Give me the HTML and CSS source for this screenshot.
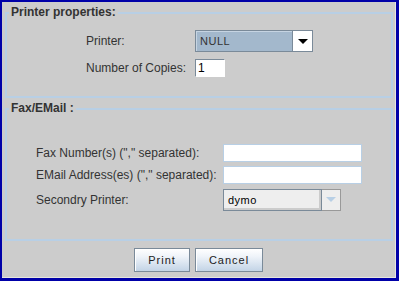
FILE: index.html
```html
<!DOCTYPE html>
<html lang="en">
<head>
  <meta charset="UTF-8" />
  <title>Print</title>
  <link rel="stylesheet" href="styles.css">
</head>
<body>
  <div class="window">
    <div class="frame">
      <div class="group printer-group">
        <span class="group-title">Printer properties:</span>
        <div class="form-grid printer-grid">
          <label>Printer:</label>
          <div class="combo combo-active">
            <span class="combo-text">NULL</span>
            <span class="combo-arrow"><i class="tri"></i></span>
          </div>
          <label>Number of Copies:</label>
          <input type="text" class="copies" value="1">
        </div>
      </div>

      <div class="group fax-group">
        <span class="group-title">Fax/EMail :</span>
        <div class="form-grid fax-grid">
          <label>Fax Number(s) (&quot;,&quot; separated):</label>
          <input type="text" class="field">
          <label>EMail Address(es) (&quot;,&quot; separated):</label>
          <input type="text" class="field">
          <label>Secondry Printer:</label>
          <div class="combo combo-plain">
            <span class="combo-text">dymo</span>
            <span class="combo-arrow"><i class="tri"></i></span>
          </div>
        </div>
      </div>

      <div class="buttons">
        <button class="btn btn-print">Print</button>
        <button class="btn btn-cancel">Cancel</button>
      </div>
    </div>
  </div>
</body>
</html>
```

FILE: styles.css
```css
body {
  margin: 0;
  font-family: "Liberation Sans", Arial, sans-serif;
  background: #cccccc;
}

.window {
  box-sizing: border-box;
  width: 399px;
  height: 281px;
  border-style: solid;
  border-color: #0000a8;
  border-width: 2px 3px 3px 2px;
  background: #cccccc;
}

.frame {
  box-sizing: border-box;
  height: 100%;
  border-right: 1px solid #e6e6de;
  border-bottom: 1px solid #e6e6de;
  padding-top: 10px;
}

.group {
  position: relative;
  margin: 0 2px 0 3px;
  border: 2px solid #b8cfe5;
}

/* titled border: the caption sits over the top line */
.group-title {
  position: absolute;
  left: 2px;
  top: -9px;
  padding: 0 2px;
  background: #cccccc;
  font-size: 12px;
  line-height: 14px;
  font-weight: bold;
  color: #333333;
}

.fax-group {
  margin-top: 10px;
}

.form-grid {
  display: grid;
  align-items: center;
  justify-items: start;
  font-size: 12px;
  color: #333333;
}

.printer-grid {
  grid-template-columns: 109px auto;
  grid-template-rows: 22px 18px;
  row-gap: 7px;
  padding: 16px 0 19px 79px;
}

.fax-grid {
  grid-template-columns: 187px auto;
  grid-template-rows: 18px 18px 23px;
  row-gap: 4px;
  padding: 34px 0 28px 29px;
}

/* combo boxes */
.combo {
  display: flex;
  width: 118px;
  height: 22px;
  box-sizing: border-box;
  font-size: 11px;
}

.combo-text {
  flex: 1;
  display: flex;
  align-items: center;
  padding-left: 4px;
  letter-spacing: 0.5px;
  border: 1px solid #7a8a99;
  box-shadow: inset 1px 1px 0 #c6d4e2;
}

.combo-arrow {
  width: 20px;
  display: flex;
  align-items: center;
  justify-content: center;
  box-sizing: border-box;
  border: 1px solid #7a8a99;
  border-left: none;
}

.tri {
  width: 0;
  height: 0;
  border-left: 5px solid transparent;
  border-right: 5px solid transparent;
  border-top: 5px solid #000000;
}

.combo-active .combo-text {
  background: #a3b8cc;
  color: #333333;
}

.combo-active .combo-arrow {
  background: #ffffff;
}

.combo-plain .combo-text {
  background: #eeeeee;
  color: #000000;
  box-shadow: inset -2px -2px 0 #cccccc;
}

.combo-plain .combo-arrow {
  background: #eeeeee;
  border-color: #999999;
  width: 19px;
}

.combo-plain .tri {
  border-top-color: #b8cfe5;
}

/* inputs */
.copies {
  box-sizing: border-box;
  width: 30px;
  height: 18px;
  margin: 0;
  padding: 0 2px;
  font: 12px "Liberation Sans", Arial, sans-serif;
  border: 1px solid #7a8a99;
  border-right-color: #ffffff;
  border-bottom-color: #ffffff;
  background: #ffffff;
}

.field {
  box-sizing: border-box;
  width: 139px;
  height: 18px;
  margin: 0;
  border: 1px solid #b8cfe5;
  background: #ffffff;
}

/* buttons */
.buttons {
  display: flex;
  justify-content: center;
  gap: 5px;
  margin-top: 7px;
}

.btn {
  box-sizing: border-box;
  height: 24px;
  padding: 0;
  font: 11px "Liberation Sans", Arial, sans-serif;
  letter-spacing: 1px;
  color: #222222;
  border: 1px solid #7a8a99;
  box-shadow: inset 1px 1px 0 #ffffff;
  background: linear-gradient(#ffffff 0%, #eef3f9 35%, #c3d4e6 100%);
}

.btn-print {
  width: 56px;
}

.btn-cancel {
  width: 68px;
}
```
